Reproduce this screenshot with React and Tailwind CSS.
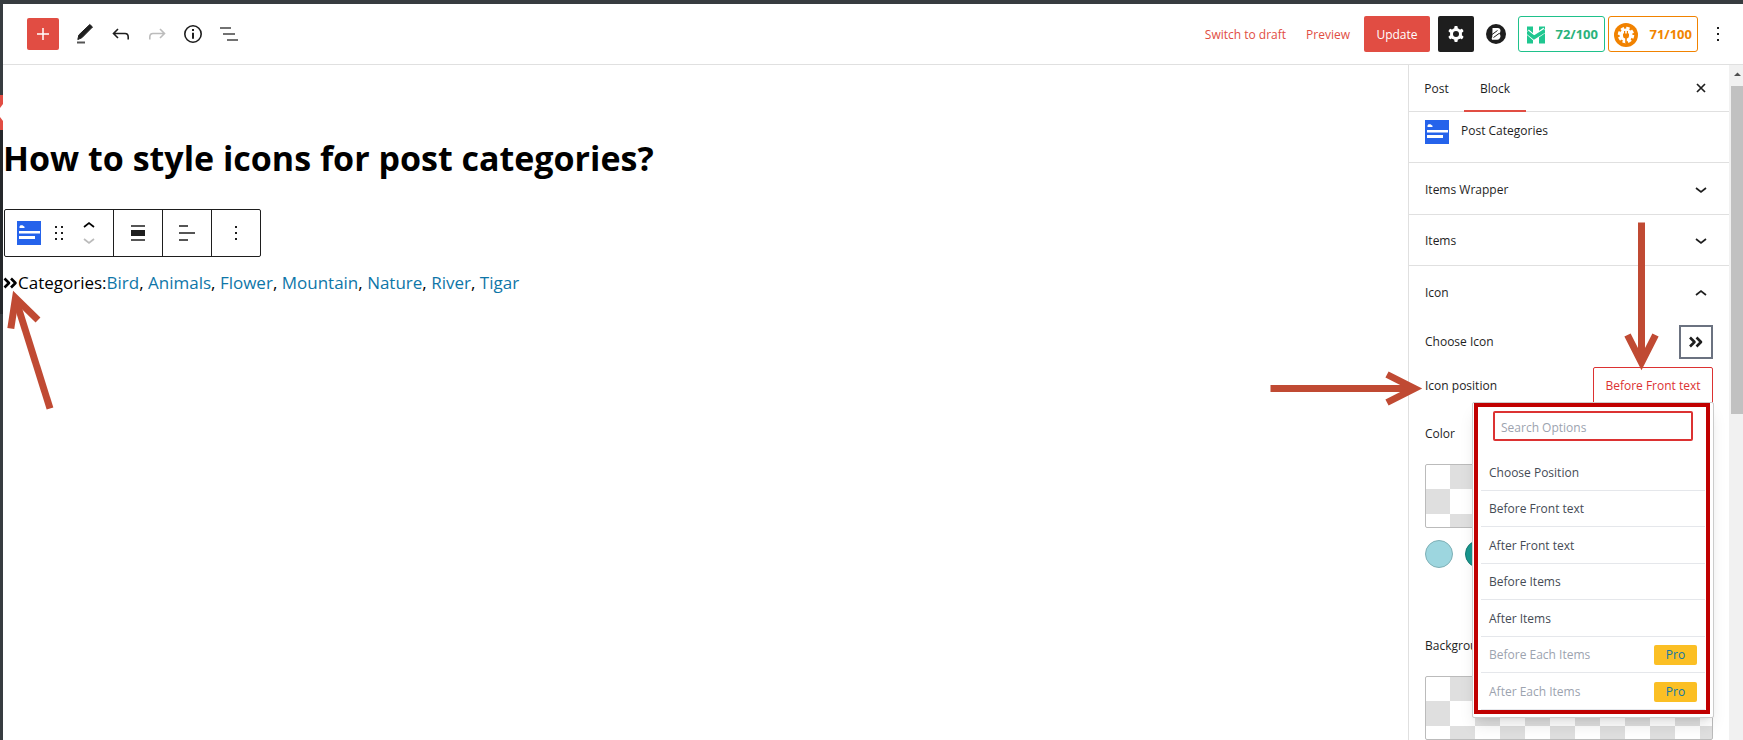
const Chevron = ({ up, className = "" }) => (
  <svg viewBox="0 0 12 8" className={className} fill="none" stroke="currentColor" strokeWidth="1.7" aria-hidden="true">
    <path d={up ? "M1 6L6 2l5 4" : "M1 2l5 4 5-4"} />
  </svg>
);

const DoubleChevron = ({ className = "" }) => (
  <svg viewBox="0 0 14 12" className={className} fill="none" stroke="currentColor" strokeWidth="2.6" strokeLinejoin="round" aria-hidden="true">
    <path d="M1 1.5L5.5 6 1 10.500M7.500 1.500L12 6 7.500 10.500" />
  </svg>
);

const BlockIcon = () => (
  <svg viewBox="0 0 24 24" className="size-6 shrink-0" aria-hidden="true">
    <rect width="24" height="24" fill="#2563eb" />
    <path d="M2.500 7V5.500l1-1.300h2l2 1.600V7zM2 10h21v2.500H2zM2 15h16v3H2z" fill="#fff" />
  </svg>
);

const Dots = () => (
  <svg viewBox="0 0 4 16" className="h-4 w-1" fill="#1e1e1e" aria-hidden="true">
    <path d="M1 1h2v2H1zM1 7h2v2H1zM1 13h2v2H1z" />
  </svg>
);

const GearIcon = () => (
  <svg viewBox="0 0 24 24" className="size-6" aria-hidden="true">
    <g fill="#fff">
      <circle cx="12" cy="12" r="6" />
      <rect x="10.300" y="4" width="3.400" height="16" rx="1" />
      <rect x="10.300" y="4" width="3.400" height="16" rx="1" transform="rotate(60 12 12)" />
      <rect x="10.300" y="4" width="3.400" height="16" rx="1" transform="rotate(120 12 12)" />
    </g>
    <circle cx="12" cy="12" r="3" fill="#1e1e1e" />
  </svg>
);

const Header = () => (
  <header className="flex h-[61px] items-center justify-between border-b border-[#e0e0e0] pl-6 pr-[15px]">
    <div className="flex items-center gap-3">
      <button aria-label="Toggle block inserter" className="mr-0.5 flex size-8 items-center justify-center rounded-[2px] bg-[#e14d43] text-white">
        <svg viewBox="0 0 12 12" className="size-3" fill="none" stroke="currentColor" strokeWidth="1.5"><path d="M6 0v12M0 6h12" /></svg>
      </button>
      <button aria-label="Tools" className="flex size-6 items-center justify-center">
        <svg viewBox="0 0 24 24" className="size-6">
          <path d="M16.800 2.500L19.500 5 8.800 15.800 4.800 17.500l1.100-4.600z" fill="#1e1e1e" stroke="#1e1e1e" strokeLinejoin="round" />
          <path d="M4 20.500h8" stroke="#555" strokeWidth="2" />
        </svg>
      </button>
      <button aria-label="Undo" className="flex size-6 items-center justify-center text-[#1e1e1e]">
        <svg viewBox="0 0 24 24" className="size-6" fill="none" stroke="currentColor" strokeWidth="1.6"><path d="M9 7l-4.500 4.500L9 16M4.500 11.500H16q3.200 0 3.200 3.500v2.500" /></svg>
      </button>
      <button aria-label="Redo" className="flex size-6 items-center justify-center text-[#bcbcbc]">
        <svg viewBox="0 0 24 24" className="size-6" fill="none" stroke="currentColor" strokeWidth="1.6"><path d="M15 7l4.500 4.500L15 16M19.500 11.500H8q-3.200 0-3.200 3.500v2.500" /></svg>
      </button>
      <button aria-label="Details" className="flex size-6 items-center justify-center">
        <svg viewBox="0 0 24 24" className="size-6" fill="none" stroke="#1e1e1e"><circle cx="12" cy="12" r="8.200" strokeWidth="1.600" /><path d="M12 10.800v6M12 7v2" strokeWidth="2" /></svg>
      </button>
      <button aria-label="List view" className="flex size-6 items-center justify-center">
        <svg viewBox="0 0 24 24" className="size-6" fill="none" stroke="#444" strokeWidth="1.700"><path d="M3 6h11M6 12h12M10 18h11" /></svg>
      </button>
    </div>
    <div className="flex items-center text-xs">
      <button className="pt-0.5 text-[#e14d43]">Switch to draft</button>
      <button className="ml-5 pt-0.5 text-[#e14d43]">Preview</button>
      <button className="ml-3.5 h-9 w-[66px] rounded-[2px] bg-[#e14d43] pt-0.5 text-white">Update</button>
      <button aria-label="Settings" className="ml-2 flex h-9 w-9 items-center justify-center rounded-[2px] bg-[#1e1e1e]"><GearIcon /></button>
      <button aria-label="Blocks plugin" className="ml-3 size-5">
        <svg viewBox="0 0 20 20" className="size-5">
          <circle cx="10" cy="10" r="10" fill="#1e1e1e" />
          <path d="M6.500 4h5.300q2.700.2 2.700 2.800 0 2-1.500 2.800 1.700.8 1.500 3-.5 3-3.300 3.200H6q-.8-1.500.3-2.800z" fill="#fff" />
          <path d="M6 10.500l5.500-4M7.500 13.500l5.500-4" stroke="#1e1e1e" strokeWidth="1" />
        </svg>
      </button>
      <button className="ml-3 flex h-9 w-[87px] items-center justify-between rounded-[3px] border border-[#1fc18b] pl-2 pr-1.5 pt-px text-[13px] font-bold text-[#2ab27b]">
        <svg viewBox="0 0 18 18" className="size-[18px]" aria-hidden="true">
          <path d="M0 .5h6v17H0zM12 .5h6v17h-6z" fill="#1fc790" />
          <path d="M0 5.500l7 6L18 4" fill="none" stroke="#fff" strokeWidth="5.500" />
          <path d="M0 6l7 5.500L18 4.500" fill="none" stroke="#1fc790" strokeWidth="3.600" />
        </svg>
        72/100
      </button>
      <button className="ml-[3px] flex h-9 w-[90px] items-center justify-between rounded-[3px] border border-[#f18200] px-[5px] pt-px text-[13px] font-bold text-[#f18500]">
        <svg viewBox="0 0 24 24" className="size-6" aria-hidden="true">
          <circle cx="12" cy="12" r="12" fill="#f18200" />
          <circle cx="12" cy="12" r="6.500" fill="#fff" />
          <circle cx="12" cy="12" r="7" fill="none" stroke="#fff" strokeWidth="2.500" strokeDasharray="3.400 2.100" />
          <path d="M9 10.500h6V13q0 2-2.200 2.500V20h-1.600v-4.500Q9 15 9 13zM10 8h1.200v2.500H10zM12.800 8H14v2.500h-1.200z" fill="#f18200" />
        </svg>
        71/100
      </button>
      <button aria-label="Options" className="ml-2.5 flex w-5 justify-center"><Dots /></button>
    </div>
  </header>
);

const categories = ["Bird", "Animals", "Flower", "Mountain", "Nature", "River", "Tigar"];

const BlockToolbar = () => (
  <div role="toolbar" className="ml-px flex h-12 w-[257px] divide-x divide-[#1e1e1e] rounded-[2px] border border-[#1e1e1e]">
    <div className="flex w-[109px] items-center pl-3">
      <button aria-label="Post Categories"><BlockIcon /></button>
      <button aria-label="Drag" className="ml-3">
        <svg viewBox="0 0 12 16" className="h-4 w-3" fill="#1e1e1e"><path d="M2 1h2v2H2zM8 1h2v2H8zM2 7h2v2H2zM8 7h2v2H8zM2 13h2v2H2zM8 13h2v2H8z" /></svg>
      </button>
      <div className="ml-[18px] flex flex-col gap-2">
        <button aria-label="Move up"><Chevron up className="h-2 w-3" /></button>
        <button aria-label="Move down" className="text-[#bbb]"><Chevron className="h-2 w-3" /></button>
      </div>
    </div>
    <button aria-label="Align" className="flex flex-1 items-center justify-center">
      <svg viewBox="0 0 16 16" className="size-4"><path d="M1 1h14M1 15h14" stroke="#555" strokeWidth="2" /><path d="M1 5h14v6H1z" fill="#1e1e1e" /></svg>
    </button>
    <button aria-label="Text align" className="flex flex-1 items-center justify-center">
      <svg viewBox="0 0 16 16" className="size-4" stroke="#555" strokeWidth="2"><path d="M0 1h9M0 8h16M0 15h9" /></svg>
    </button>
    <button aria-label="More" className="flex flex-1 items-center justify-center"><Dots /></button>
  </div>
);

const Editor = () => (
  <main className="min-w-0 flex-1">
    <h1 className="mt-[68px] text-[34px] leading-[50px] font-bold text-black">How to style icons for post categories?</h1>
    <div className="mt-[26px]"><BlockToolbar /></div>
    <div className="mt-3 flex items-center text-[17px] leading-7 text-black">
      <DoubleChevron className="h-3 w-[15px]" />
      <p>
        Categories:
        {categories.map((name, i) => (
          <span key={name}>
            <a href="#category" className="text-[#0e76a8]">{name}</a>
            {i < categories.length - 1 ? ", " : ""}
          </span>
        ))}
      </p>
    </div>
  </main>
);

const options = [
  { name: "Choose Position" },
  { name: "Before Front text" },
  { name: "After Front text" },
  { name: "Before Items" },
  { name: "After Items" },
  { name: "Before Each Items", pro: true },
  { name: "After Each Items", pro: true },
];

const OptionsMenu = () => (
  <div className="absolute top-[35px] right-[-1px] z-10 w-[242px] rounded-[2px] border border-[#ccc] bg-white pr-[3px] pb-[3px] pl-px shadow-lg">
    <div className="border-4 border-[#c00000]">
      <div className="pt-1 pr-[13px] pl-[15px]">
        <input aria-label="Search Options" placeholder="Search Options" className="block h-[30px] w-full rounded-[2px] border-2 border-[#dc3232] px-1.5 pt-0.5 text-xs placeholder:text-[#9ca3af]" />
      </div>
      <ul className="mt-[13px] pr-px pl-[3px]">
        {options.map((o) => (
          <li key={o.name} className="border-b border-[#e5e7eb] odd:h-[37px] even:h-9">
            <button disabled={o.pro} className={o.pro ? "flex h-full w-full items-center justify-between px-2 pt-px text-left text-[#9ca3af]" : "flex h-full w-full items-center px-2 pt-px text-left text-[#454b55]"}>
              {o.name}
              {o.pro && <span className="flex h-5 w-[43px] items-center justify-center rounded-[2px] bg-[#fbbf24] text-[#0e76a8]">Pro</span>}
            </button>
          </li>
        ))}
      </ul>
    </div>
  </div>
);

const Swatch = () => (
  <div className="h-16 rounded-[2px] border border-[#bbb] bg-[conic-gradient(#fff_25%,#dfdfdf_0_50%,#fff_0_75%,#dfdfdf_0)] bg-size-[50px_50px] bg-position-[-26px_-1px]" />
);

const PanelRow = ({ title, open }) => (
  <button aria-expanded={!!open} className="flex h-full w-full items-center justify-between pt-0.5 pr-[22px] pl-4 font-medium">
    {title}
    <Chevron up={open} className="h-2 w-3" />
  </button>
);

const Sidebar = () => (
  <aside className="w-[321px] shrink-0 border-l border-[#e0e0e0] text-xs text-[#1e1e1e]">
    <div className="flex h-[47px] items-stretch border-b border-[#e0e0e0]">
      <button className="w-[55px] pt-0.5 font-medium">Post</button>
      <button className="-mb-px w-[62px] border-b-2 border-[#e14d43] pt-0.5 font-medium">Block</button>
      <button aria-label="Close settings" className="mr-[22px] ml-auto">
        <svg viewBox="0 0 12 12" className="size-3" stroke="#1e1e1e" strokeWidth="1.700"><path d="M2 2l8 8M10 2l-8 8" /></svg>
      </button>
    </div>
    <div className="flex h-[51px] gap-3 border-b border-[#e0e0e0] px-4 pt-2">
      <BlockIcon />
      <h2 className="pt-[3px] font-medium leading-4">Post Categories</h2>
    </div>
    <div className="h-[52px] border-b border-[#e0e0e0]"><PanelRow title="Items Wrapper" /></div>
    <div className="h-[51px] border-b border-[#e0e0e0]"><PanelRow title="Items" /></div>
    <div className="h-[52px]"><PanelRow title="Icon" open /></div>
    <div className="px-4">
      <div className="mt-1.5 flex h-[35px] items-center justify-between">
        <span>Choose Icon</span>
        <button aria-label="Choose Icon" className="flex size-[34px] items-center justify-center border-2 border-[#6b7280]"><DoubleChevron className="h-3 w-3.5" /></button>
      </div>
      <div className="relative mt-2 flex h-9 items-center justify-between">
        <span className="pt-0.5">Icon position</span>
        <button className="h-full w-[120px] rounded-t-[2px] border border-[#dc3232] pt-0.5 text-[#dc3232]">Before Front text</button>
        <OptionsMenu />
      </div>
      <p className="mt-[21px] leading-5">Color</p>
      <div className="mt-5"><Swatch /></div>
      <div className="mt-3 flex gap-3">
        <button aria-label="Light blue" className="size-7 rounded-full border border-[#7fb0b6] bg-[#9dd6df]" />
        <button aria-label="Teal" className="size-7 rounded-full border border-[#137a72] bg-[#18978f]" />
      </div>
      <p className="mt-[68px] leading-5">Background</p>
      <div className="mt-5"><Swatch /></div>
    </div>
  </aside>
);

const Arrow = ({ points, head }) => (
  <g fill="none" stroke="#c04a33" strokeWidth="7">
    <path d={points} />
    <path d={head} strokeMiterlimit="10" />
  </g>
);

export default function App() {
  return (
    <div className="relative flex h-screen overflow-hidden bg-white font-['Open_Sans','Noto_Sans',sans-serif]">
      <div className="flex w-[3px] shrink-0 flex-col bg-[#373c40]">
        <div className="h-[95px]" />
        <svg viewBox="0 0 3 35" className="h-[35px] w-[3px]" aria-hidden="true"><path d="M0 0h3v35H0z" fill="#e14d43" /><path d="M3 9L0 13v9l3 4z" fill="#fff" /></svg>
        <div className="h-[184px] bg-[#25282b]" />
      </div>
      <div className="flex min-w-0 flex-1 flex-col border-t-4 border-[#373c40]">
        <Header />
        <div className="flex min-h-0 flex-1">
          <Editor />
          <Sidebar />
          <div className="flex w-3.5 shrink-0 flex-col bg-[#f1f1f1] pl-0.5">
            <svg viewBox="0 0 12 21" className="h-[21px] w-full"><path d="M3 11l3.500-3.500L10 11z" fill="#505050" /></svg>
            <div className="h-[328px] bg-[#c1c1c1]" />
          </div>
        </div>
      </div>
      <svg viewBox="0 0 50 130" className="pointer-events-none absolute top-[290px] left-[4px] h-[130px] w-[50px]" aria-hidden="true">
        <Arrow points="M46 118.500L12.500 12" head="M6.800 38.500L11.500 8L34 30" />
      </svg>
      <svg viewBox="0 0 156 40" className="pointer-events-none absolute top-[368px] right-[320px] z-20 h-10 w-[156px]" aria-hidden="true">
        <Arrow points="M3.500 20.500H145" head="M120 6.500L147.500 20.500L120 34.500" />
      </svg>
      <svg viewBox="0 0 36 150" className="pointer-events-none absolute top-[222px] right-[84px] z-20 h-[150px] w-9" aria-hidden="true">
        <Arrow points="M18.500 0.500V138" head="M4.500 113L18.500 140.500L32.500 113" />
      </svg>
    </div>
  );
}
